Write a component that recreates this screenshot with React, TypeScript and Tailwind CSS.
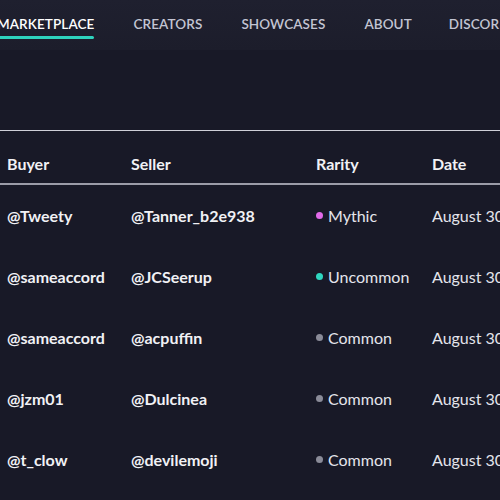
import React from "react";

const navItems = [
  { label: "MARKETPLACE", active: true },
  { label: "CREATORS" },
  { label: "SHOWCASES" },
  { label: "ABOUT" },
  { label: "DISCORD" },
];

const sales = [
  { buyer: "@Tweety", seller: "@Tanner_b2e938", rarity: "Mythic", date: "August 30, 2021" },
  { buyer: "@sameaccord", seller: "@JCSeerup", rarity: "Uncommon", date: "August 30, 2021" },
  { buyer: "@sameaccord", seller: "@acpuffin", rarity: "Common", date: "August 30, 2021" },
  { buyer: "@jzm01", seller: "@Dulcinea", rarity: "Common", date: "August 30, 2021" },
  { buyer: "@t_clow", seller: "@devilemoji", rarity: "Common", date: "August 30, 2021" },
];

const dotColor: Record<string, string> = {
  Mythic: "bg-[#e06ae8]",
  Uncommon: "bg-[#2fd6c0]",
  Common: "bg-[#8a8b98]",
};

export default function App() {
  return (
    <div
      className="w-[500px] h-[500px] overflow-hidden bg-[#181927] text-white"
      style={{ fontFamily: "Lato, 'Noto Sans', sans-serif" }}
    >
      {/* Top nav */}
      <nav className="h-[50px] bg-gradient-to-b from-[#1f202f] to-[#1c1d2b] flex items-start whitespace-nowrap">
        <div className="flex -ml-[3px] pt-[16px]">
          {navItems.map((item) => (
            <div key={item.label} className="flex flex-col mr-[39px] last:-ml-[2px]">
              <span
                className={
                  "text-[13.5px] font-semibold tracking-[0.1px] leading-[17px] " +
                  (item.active ? "text-white" : "text-[#c3c5d3]")
                }
              >
                {item.label}
              </span>
              {item.active && <span className="mt-[3px] h-[3px] bg-[#2ed3bd] rounded-full" />}
            </div>
          ))}
        </div>
      </nav>

      {/* Sales table */}
      <div className="mt-[80px] border-t border-[#cfd0d8] whitespace-nowrap">
        <div className="flex items-center pt-[23px] pb-[10px] leading-[19px] border-b-2 border-[#9b9ca8] text-[16px] font-bold text-[#f1f1f5]">
          <div className="w-[131px] pl-[7px] shrink-0">Buyer</div>
          <div className="w-[185px] shrink-0">Seller</div>
          <div className="w-[116px] shrink-0">Rarity</div>
          <div className="shrink-0">Date</div>
        </div>
        {sales.map((row, i) => (
          <div key={i} className="flex items-center h-[61px] text-[16px] text-[#f1f1f5]">
            <div className="w-[131px] pl-[7px] shrink-0 font-bold">{row.buyer}</div>
            <div className="w-[185px] shrink-0 font-bold">{row.seller}</div>
            <div className="w-[116px] shrink-0 flex items-center gap-[5px] text-[#e4e5ec]">
              <span className={"w-[7px] h-[7px] rounded-full " + dotColor[row.rarity]} />
              {row.rarity}
            </div>
            <div className="shrink-0 text-[#e4e5ec]">{row.date}</div>
          </div>
        ))}
      </div>
    </div>
  );
}
